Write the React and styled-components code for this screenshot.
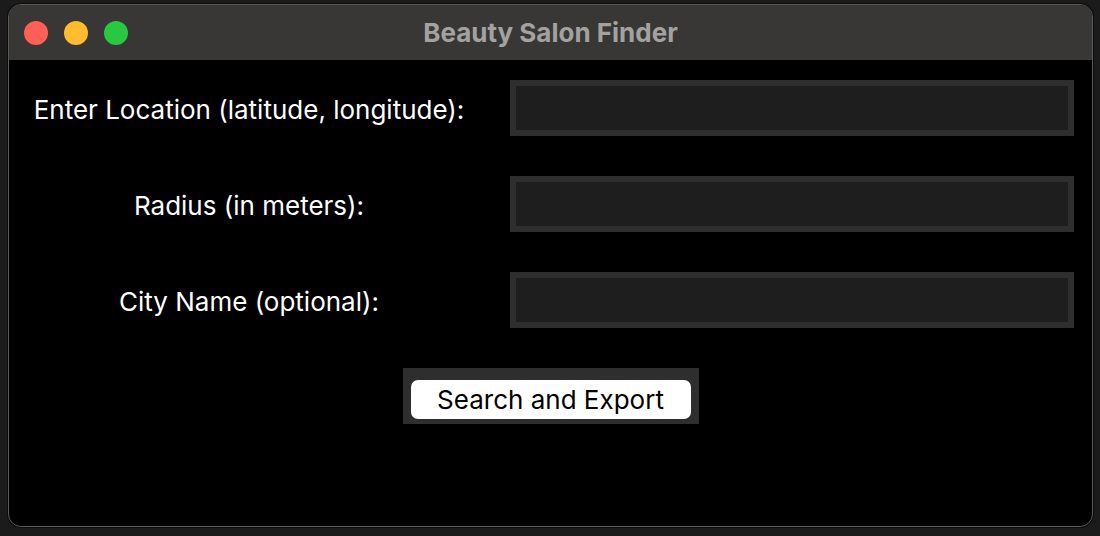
import styled, { createGlobalStyle } from "styled-components";

/* ===== GLOBAL ===== */

const Global = createGlobalStyle`
html, body {
  margin:0;
  padding:0;
  background:#1b1b1b;
}
body {
  font-family:Inter, "Noto Sans", "Liberation Sans", sans-serif;
}
`;

/* ===== WINDOW ===== */

const Desktop = styled.div`
width:1100px;
height:536px;
padding:4px 7px 9px 8px;
box-sizing:border-box;
`;

const Window = styled.div`
height:100%;
box-sizing:border-box;
border:1px solid #5a5a5a;
border-radius:13px;
overflow:hidden;
background:#000;
display:flex;
flex-direction:column;
box-shadow:0 0 0 1px #0c0c0c;
`;

const TitleBar = styled.div`
height:55px;
flex:none;
background:#383736;
display:flex;
align-items:center;
position:relative;
padding-left:15px;
`;

const Lights = styled.div`
display:flex;
gap:16px;
`;

const Light = styled.span`
width:24px;
height:24px;
border-radius:50%;
background:${p => p.$color};
`;

const Title = styled.div`
position:absolute;
left:0;
right:0;
text-align:center;
color:#a3a2a1;
font-size:26px;
font-weight:700;
pointer-events:none;
`;

/* ===== FORM ===== */

const Content = styled.div`
padding:20px 18px 0 18px;
display:flex;
flex-direction:column;
gap:40px;
`;

const Row = styled.div`
display:grid;
grid-template-columns:444px 1fr;
column-gap:39px;
align-items:center;
`;

const Label = styled.div`
color:#fff;
font-size:26px;
text-align:center;
padding-top:2px;
`;

const Field = styled.input`
height:56px;
box-sizing:border-box;
border:6px solid #2e2e2e;
background:#1e1e1e;
outline:none;
color:#fff;
font-size:22px;
padding:0 8px;
width:100%;
`;

const ButtonFrame = styled.div`
align-self:center;
background:#2e2e2e;
padding:12px 8px 5px;
`;

const Button = styled.button`
width:280px;
height:39px;
border:none;
border-radius:7px;
background:#fff;
color:#000;
font-family:inherit;
font-size:26px;
display:block;
padding:0;
cursor:pointer;
`;

/* ===== COMPONENT ===== */

const fields = [
  "Enter Location (latitude, longitude):",
  "Radius (in meters):",
  "City Name (optional):",
];

export default function App() {
  return (
    <>
      <Global />
      <Desktop>
        <Window>
          <TitleBar>
            <Lights>
              <Light $color="#fe5f57" />
              <Light $color="#febc2e" />
              <Light $color="#28c840" />
            </Lights>
            <Title>Beauty Salon Finder</Title>
          </TitleBar>

          <Content>
            {fields.map(label => (
              <Row key={label}>
                <Label>{label}</Label>
                <Field />
              </Row>
            ))}

            <ButtonFrame>
              <Button>Search and Export</Button>
            </ButtonFrame>
          </Content>
        </Window>
      </Desktop>
    </>
  );
}
